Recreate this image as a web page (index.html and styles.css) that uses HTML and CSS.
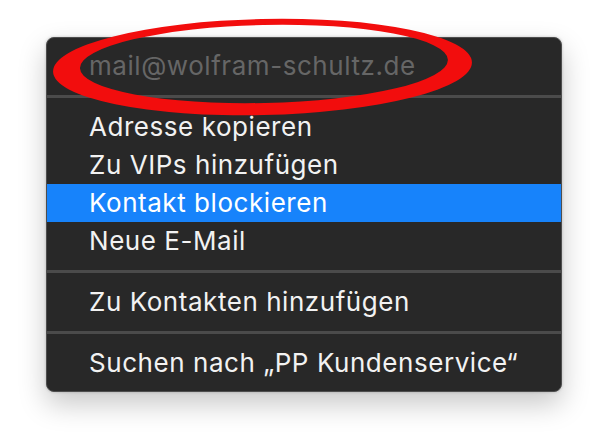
FILE: index.html
```html
<!DOCTYPE html>
<html lang="de">
<head>
<meta charset="utf-8">
<link rel="stylesheet" href="styles.css">
</head>
<body>
<div class="stage">
  <div class="menu">
    <div class="item header">mail@wolfram-schultz.de</div>
    <div class="sep"></div>
    <div class="item">Adresse kopieren</div>
    <div class="item">Zu VIPs hinzufügen</div>
    <div class="item active">Kontakt blockieren</div>
    <div class="item">Neue E-Mail</div>
    <div class="sep"></div>
    <div class="item">Zu Kontakten hinzufügen</div>
    <div class="sep"></div>
    <div class="item">Suchen nach „PP Kundenservice“</div>
  </div>
  <svg class="circle" width="608" height="140" viewBox="0 0 608 140">
    <path fill="#f20d0d" fill-rule="evenodd" transform="rotate(-1.3 263 67)"
      d="M53 67 A209.5 48 0 1 0 472 67 A209.5 48 0 1 0 53 67 Z M80 64 A184 39 0 1 0 448 64 A184 39 0 1 0 80 64 Z"/>
  </svg>
</div>
</body>
</html>
```

FILE: styles.css
```css
html, body {
  margin: 0;
  padding: 0;
  background: #ffffff;
}
.stage {
  position: relative;
  width: 608px;
  height: 446px;
  display: flex;
  align-items: flex-start;
  padding: 37px 0 0 46px;
  box-sizing: border-box;
}
.menu {
  width: 516px;
  box-sizing: border-box;
  background: #282828;
  border: 1px solid #4e4e4e;
  border-radius: 8px;
  padding: 9px 0;
  display: flex;
  flex-direction: column;
  box-shadow: 0 12px 28px rgba(0, 0, 0, 0.22), 0 0 3px rgba(0, 0, 0, 0.2);
  font-family: Inter, "Liberation Sans", sans-serif;
  font-size: 26px;
  letter-spacing: 0.55px;
  color: #f2f2f2;
}
.item {
  height: 38px;
  line-height: 38px;
  padding-left: 42px;
  white-space: nowrap;
}
.item.header {
  color: #666666;
}
.item.active {
  background: #1783fb;
  color: #ffffff;
}
.sep {
  height: 23px;
  display: flex;
  align-items: center;
}
.sep::before {
  content: "";
  display: block;
  width: 100%;
  height: 3px;
  background: #4b4b4b;
}
.circle {
  position: absolute;
  left: 0;
  top: 0;
}
```
